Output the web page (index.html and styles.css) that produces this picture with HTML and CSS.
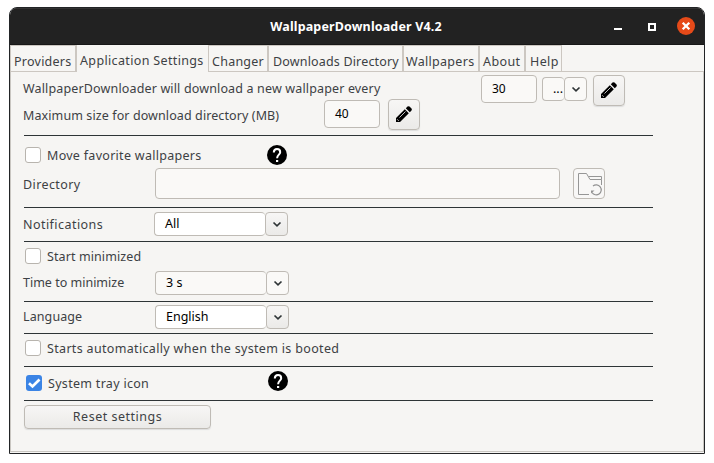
FILE: index.html
```html
<!DOCTYPE html>
<html lang="en">
<head>
<meta charset="utf-8">
<title>WallpaperDownloader V4.2</title>
<link rel="stylesheet" href="styles.css">
</head>
<body>
<svg class="defs" aria-hidden="true">
  <symbol id="chevron" viewBox="0 0 10 8"><path d="M1.500 1.500 5 4.800 8.500 1.500" fill="none" stroke="#2e3436" stroke-width="1.700"/></symbol>
  <symbol id="pencil" viewBox="0 0 16 16"><path d="M0 16V12L8.800 3.200 12.800 7.200 4 16ZM9.800 2.200 11.500 .5Q12.500-.2 13.500.5L15.500 2.500Q16.200 3.500 15.500 4.500L13.800 6.200Z"/><path d="M3.500 11.500 9.500 5.500M1.200 13.300 2.700 14.800" fill="none" stroke="#f4f3f2" stroke-width=".8"/></symbol>
  <symbol id="question" viewBox="0 0 20 20"><circle cx="10" cy="10" r="10"/><path d="M6.800 7.600C6.800 5.500 8 4.100 10 4.100S13.200 5.400 13.200 7.200C13.200 9.500 10.100 10 10.100 13.200" fill="none" stroke="#fff" stroke-width="2"/><path d="M9 15h2.200v2H9z" fill="#fff"/></symbol>
</svg>
<main class="window">
  <header class="titlebar">
    <h1>WallpaperDownloader V4.2</h1>
    <div class="controls">
      <span class="minimize"></span>
      <span class="maximize"></span>
      <span class="close"><svg viewBox="0 0 18 18"><path d="M5.700 5.700 12.300 12.300M12.300 5.700 5.700 12.300" stroke="#fff" stroke-width="2.300"/></svg></span>
    </div>
  </header>
  <nav class="tabs">
    <span class="tab providers">Providers</span>
    <span class="tab selected">Application Settings</span>
    <span class="tab changer">Changer</span>
    <span class="tab downloads">Downloads Directory</span>
    <span class="tab wallpapers">Wallpapers</span>
    <span class="tab about">About</span>
    <span class="tab help">Help</span>
    <span class="tab-rest"></span>
  </nav>
  <div class="panel">
    <section class="download">
      <div class="row interval">
        <span class="label">WallpaperDownloader will download a new wallpaper every</span>
        <span class="field number">30</span>
        <span class="combo small off"><span class="value">...</span><span class="arrow"><svg><use href="#chevron"/></svg></span></span>
        <span class="button edit"><svg><use href="#pencil"/></svg></span>
      </div>
      <div class="row size">
        <span class="label">Maximum size for download directory (MB)</span>
        <span class="field number">40</span>
        <span class="button edit"><svg><use href="#pencil"/></svg></span>
      </div>
    </section>
    <section class="favorites">
      <div class="row move">
        <span class="check"></span><span class="label">Move favorite wallpapers</span>
        <svg class="hint"><use href="#question"/></svg>
      </div>
      <div class="row directory">
        <span class="label">Directory</span><span class="field path"></span>
        <span class="button folder"><svg viewBox="0 0 25 23"><path d="M11 21.500H.500V.500H8.500L12 6.500H23.500V12M10.500 3.500H23.500V6.500" fill="none" stroke="#969696"/><path d="M14 19.500A5 5 0 1 0 15 13" fill="none" stroke="#929292" stroke-width="1.200"/><path d="M13 17.500h3.500L13 20.500z" fill="#929292"/></svg></span>
      </div>
    </section>
    <section class="notifications">
      <div class="row"><span class="label">Notifications</span><span class="combo"><span class="value">All</span><span class="arrow"><svg><use href="#chevron"/></svg></span></span></div>
    </section>
    <section class="minimizing">
      <div class="row start"><span class="check"></span><span class="label">Start minimized</span></div>
      <div class="row time"><span class="label">Time to minimize</span><span class="combo off"><span class="value">3 s</span><span class="arrow"><svg><use href="#chevron"/></svg></span></span></div>
    </section>
    <section class="language">
      <div class="row"><span class="label">Language</span><span class="combo"><span class="value">English</span><span class="arrow"><svg><use href="#chevron"/></svg></span></span></div>
    </section>
    <section class="boot">
      <div class="row"><span class="check"></span><span class="label">Starts automatically when the system is booted</span></div>
    </section>
    <section class="tray">
      <div class="row"><span class="check on"><svg viewBox="0 0 16 16"><path d="M3 8.300 6.500 11.500 13.500 4.500" fill="none" stroke="#fff" stroke-width="2.700"/></svg></span><span class="label">System tray icon</span>
        <svg class="hint"><use href="#question"/></svg></div>
    </section>
    <section class="reset">
      <div class="row"><span class="button">Reset settings</span></div>
    </section>
  </div>
</main>
</body>
</html>
```

FILE: styles.css
```css
* { box-sizing: border-box; }
body { margin: 0; padding: 7px 9px 9px; background: #fff; color: #3d4144; font: 12.5px/16px "Noto Sans", sans-serif; white-space: nowrap; }
svg { display: block; }
.defs { display: none; }
.window { width: 696px; height: 447px; border: 1px solid #222426; border-radius: 8px 8px 0 0; background: #f6f5f3; overflow: hidden; display: flex; flex-direction: column; }
.titlebar { flex: 0 0 37px; display: grid; grid-template-columns: 1fr; align-items: center; background: #222; border-top: 1px solid #333; border-bottom: 1px solid #171717; }
.titlebar h1 { grid-area: 1 / 1; margin: 0 2px 0 0; text-align: center; color: #fff; font-size: 12.5px; line-height: 16px; letter-spacing: .15px; }
.controls { grid-area: 1 / 1; justify-self: end; display: flex; align-items: center; padding-right: 9px; }
.minimize { width: 8px; height: 2px; margin: 5px 26px 0 0; background: #fff; }
.maximize { width: 8px; height: 8px; margin-right: 21px; border: 2px solid #fff; }
.close { width: 18px; height: 18px; margin-top: -1px; border-radius: 50%; background: #e64a19; }

.tabs { flex: 0 0 27px; display: flex; }
.tab { border: 1px solid #ccc7c1; border-width: 1px 1px 1px 2px; padding: 8px 0 0 3px; letter-spacing: .25px; }
.providers { width: 65px; border-left-width: 1px; border-right: 0; }
.selected { width: 133px; border-width: 0 0 0 2px; padding-left: 3px; letter-spacing: .35px; }
.changer { width: 59px; border-left-width: 1px; border-right: 0; }
.downloads { width: 135px; border-right: 0; padding-left: 4px; letter-spacing: .17px; }
.wallpapers { width: 76px; border-right: 0; padding-left: 2px; letter-spacing: .3px; }
.about { width: 46px; border-right: 0; letter-spacing: .4px; }
.help { width: 38px; padding-left: 4px; letter-spacing: .4px; }
.tab-rest { flex: 1; border-bottom: 1px solid #ccc7c1; }
.panel { flex: 1; padding-left: 12px; border: 1px solid #c9c6c1; border-top: 0; margin-bottom: 1px; display: flex; flex-direction: column; }

section { width: 629px; border-top: 1px solid #2e3436; margin-left: 1px; }
section.download { border-top: 0; height: 63px; }
.favorites { height: 72px; }
.notifications { height: 34px; }
.minimizing { height: 60px; }
.language { height: 32px; }
.boot { height: 33px; }
.tray { height: 34px; }
.reset { height: 50px; }
.row { display: flex; align-items: flex-start; margin-left: -1px; }
.label { flex: none; width: 131px; }
.field, .value, .arrow, .button { flex: none; border: 1px solid #bfbbb5; border-radius: 4px; }
.field { background: #faf9f7; }
.number { width: 56px; height: 28px; padding: 5px 0 0 10px; color: #000; font-size: 12px; }
.button { background: linear-gradient(#f7f6f5, #ebeae8); box-shadow: 0 1px 1px #ddd; }
.edit { width: 32px; height: 31px; padding: 6px 0 0 7px; }
.edit svg { width: 16px; height: 16px; }
.combo { flex: none; display: flex; height: 24px; color: #000; }
.value { width: 111px; padding: 3px 0 0 10px; border-right: 0; background: #fff; }
.arrow { width: 23px; padding: 8px 0 0 6px; background: linear-gradient(#f7f6f5, #ebeae8); }
.arrow svg { width: 10px; height: 8px; }
.off .value, .off .arrow { background: #faf9f7; }
.check { flex: none; width: 16px; height: 16px; margin-left: 2px; border: 1px solid #b8b4ae; border-radius: 3px; background: #fff; }
.check.on { margin-left: 3px; border: 0; background: #3b84e5; }
.check + .label { margin-left: 6px; width: 228px; }
.hint { flex: none; width: 20px; height: 20px; }

.interval { height: 27px; }
.interval .label { width: 458px; margin-top: 9px; letter-spacing: .15px; }
.interval .number { margin-top: 3px; }
.interval .combo { margin: 5px 6px 0 5px; }
.small .value { width: 22px; padding-left: 10px; overflow: hidden; }
.interval .edit { margin-top: 3px; }
.size .label { width: 301px; margin-top: 9px; letter-spacing: .1px; }
.size .number { margin: 1px 8px 0 0; }
.move .check { margin-top: 11px; }
.move .label { margin-top: 12px; letter-spacing: .29px; }
.move .hint { margin: 9px 0 0 -8px; }
.move { height: 32px; }
.directory .label { margin: 9px 1px 0 0; letter-spacing: .4px; }
.path { width: 405px; height: 31px; margin-right: 13px; }
.folder { width: 32px; height: 31px; padding: 4px 0 0 4px; background: #f8f7f6; box-shadow: none; }
.folder svg { width: 25px; height: 23px; }
.notifications .row { padding-top: 4px; }
.notifications .label { margin-top: 5px; letter-spacing: .45px; }
.start { height: 29px; padding-top: 6px; }
.start .label { margin-top: 1px; letter-spacing: .1px; }
.time .label { margin: 4px 1px 0 0; }
.language .row { padding-top: 3px; }
.language .label { margin: 4px 1px 0 0; letter-spacing: .1px; }
.boot .row { padding-top: 6px; }
.boot .label { margin-top: 1px; letter-spacing: .33px; }
.tray .row { padding-top: 4px; }
.tray .check { margin-top: 4px; }
.tray .label { margin-top: 5px; letter-spacing: .3px; }
.tray .hint { margin-left: -8px; }
.reset .row { padding: 4px 0 0 1px; }
.reset .button { width: 187px; height: 24px; padding-top: 3px; text-align: center; letter-spacing: .5px; }
```
